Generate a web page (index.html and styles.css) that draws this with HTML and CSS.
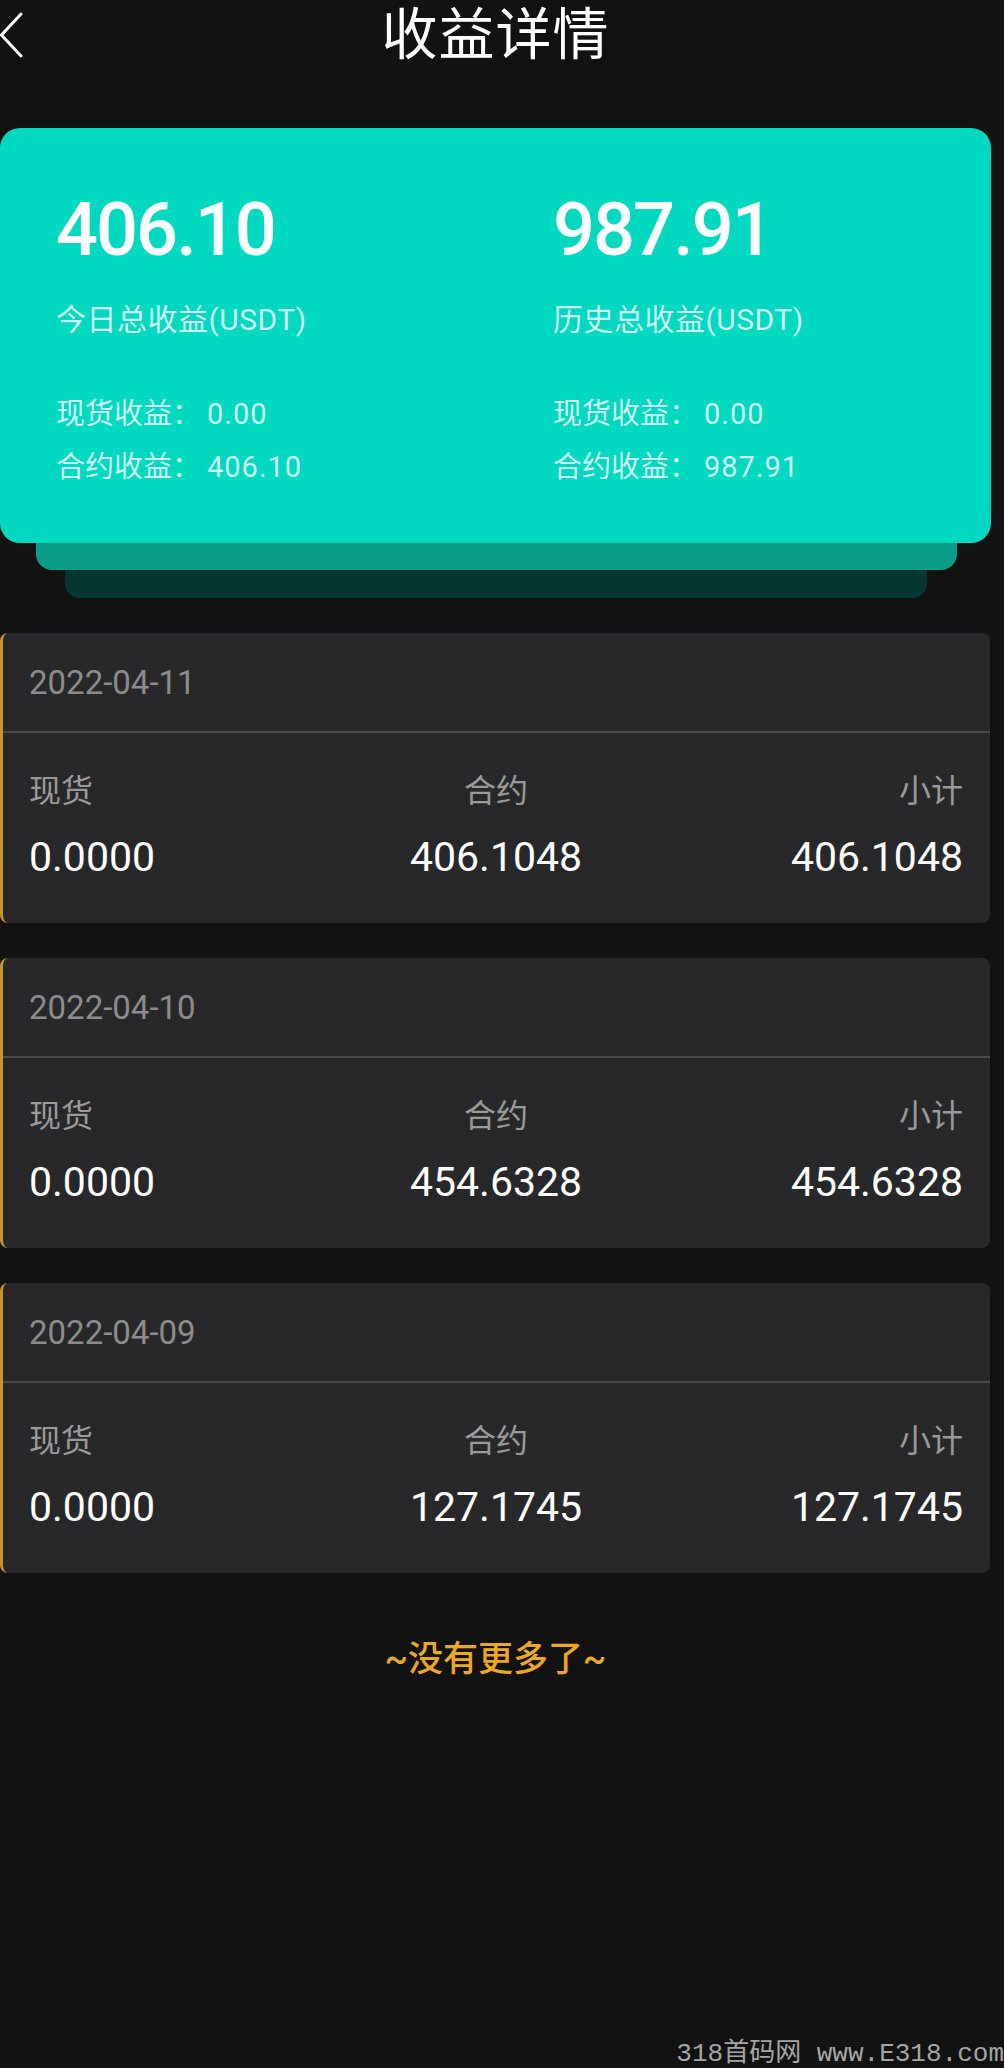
FILE: index.html
```html
<!DOCTYPE html>
<html lang="zh-CN">
<head>
    <meta charset="UTF-8">
    <meta name="viewport" content="width=device-width, initial-scale=1.0">
    <title>收益详情</title>
    <link rel="stylesheet" href="styles.css">
</head>
<body>
    <div class="page">
        <header class="topbar">
            <a class="back" href="#">
                <svg width="24" height="46" viewBox="0 0 24 46">
                    <polyline points="21,2 1.5,23 21,44" fill="none" stroke="#fff" stroke-width="3" stroke-linecap="round" stroke-linejoin="round"/>
                </svg>
            </a>
            <h1>收益详情</h1>
            <span></span>
        </header>

        <section class="summary">
            <div class="summary-card">
                <div class="summary-col">
                    <div class="amount">406.10</div>
                    <div class="amount-label">今日总收益(USDT)</div>
                    <div class="row first">现货收益：<span>0.00</span></div>
                    <div class="row">合约收益：<span>406.10</span></div>
                </div>
                <div class="summary-col">
                    <div class="amount">987.91</div>
                    <div class="amount-label">历史总收益(USDT)</div>
                    <div class="row first">现货收益：<span>0.00</span></div>
                    <div class="row">合约收益：<span>987.91</span></div>
                </div>
            </div>
            <div class="layer layer-mid"></div>
            <div class="layer layer-low"></div>
        </section>

        <section class="records">
            <div class="record">
                <div class="record-date">2022-04-11</div>
                <div class="record-body">
                    <div class="lbl">现货</div>
                    <div class="lbl mid">合约</div>
                    <div class="lbl end">小计</div>
                    <div class="val">0.0000</div>
                    <div class="val mid">406.1048</div>
                    <div class="val end">406.1048</div>
                </div>
            </div>
            <div class="record">
                <div class="record-date">2022-04-10</div>
                <div class="record-body">
                    <div class="lbl">现货</div>
                    <div class="lbl mid">合约</div>
                    <div class="lbl end">小计</div>
                    <div class="val">0.0000</div>
                    <div class="val mid">454.6328</div>
                    <div class="val end">454.6328</div>
                </div>
            </div>
            <div class="record">
                <div class="record-date">2022-04-09</div>
                <div class="record-body">
                    <div class="lbl">现货</div>
                    <div class="lbl mid">合约</div>
                    <div class="lbl end">小计</div>
                    <div class="val">0.0000</div>
                    <div class="val mid">127.1745</div>
                    <div class="val end">127.1745</div>
                </div>
            </div>
        </section>

        <p class="end-tip">~没有更多了~</p>
    </div>

    <div class="watermark">318首码网 www.E318.com</div>
</body>
</html>
```

FILE: styles.css
```css
html {
    background: #121212;
}

body {
    margin: 0;
    min-height: 2068px;
    position: relative;
    background: #121212;
    color: #fff;
    font-family: Roboto, "Noto Sans CJK SC", sans-serif;
}

.page {
    width: 991px;
}

.topbar {
    display: grid;
    grid-template-columns: 1fr auto 1fr;
    align-items: center;
    height: 70px;
    margin-bottom: 58px;
}

.back {
    display: flex;
    align-items: center;
}

.topbar h1 {
    margin: 0;
    font-size: 56px;
    line-height: 70px;
    font-weight: 400;
    letter-spacing: 1px;
}

/* top summary card */
.summary-card {
    display: grid;
    grid-template-columns: 497px 1fr;
    padding: 62px 0 56px 56px;
    background: #00d8c0;
    border-radius: 20px;
}

.amount {
    font-size: 74px;
    line-height: 80px;
    font-weight: 500;
    letter-spacing: -2px;
}

.amount-label {
    margin-top: 30px;
    font-size: 30px;
    line-height: 40px;
    letter-spacing: 0.5px;
    color: rgba(255, 255, 255, 0.82);
}

.row {
    margin-top: 13px;
    font-size: 29px;
    line-height: 40px;
    color: rgba(255, 255, 255, 0.82);
}

.row span {
    margin-left: 6px;
    letter-spacing: 1px;
}

.row.first {
    margin-top: 54px;
}

.layer-mid {
    height: 27px;
    margin: 0 34px 0 36px;
    background: #0a9b89;
    border-radius: 0 0 16px 16px;
}

.layer-low {
    height: 28px;
    margin: 0 64px 0 65px;
    background: #053632;
    border-radius: 0 0 14px 14px;
}

/* daily records */
.records {
    display: flex;
    flex-direction: column;
    gap: 35px;
    margin-top: 35px;
}

.record {
    background: #28282a;
    border-left: 3px solid #c7962b;
    border-radius: 8px;
    margin-right: 1px;
}

.record-date {
    display: flex;
    align-items: center;
    height: 98px;
    padding-left: 26px;
    border-bottom: 2px solid #4a4a4c;
    font-size: 33px;
    color: #8c8c8c;
}

.record-body {
    display: grid;
    grid-template-columns: repeat(3, 1fr);
    row-gap: 19px;
    padding: 36px 27px 41px 26px;
}

.lbl {
    font-size: 32px;
    line-height: 44px;
    color: #9a9a9a;
}

.val {
    font-size: 41px;
    line-height: 50px;
}

.mid {
    text-align: center;
}

.end {
    text-align: right;
}

.end-tip {
    margin: 65px 0 0;
    text-align: center;
    font-size: 35px;
    line-height: 44px;
    font-weight: 500;
    color: #eaa824;
}

.watermark {
    position: absolute;
    right: 0;
    bottom: 0;
    font-family: "Liberation Mono", "Noto Sans CJK SC", monospace;
    font-size: 26px;
    line-height: 28px;
    color: #a5a5a5;
}
```
